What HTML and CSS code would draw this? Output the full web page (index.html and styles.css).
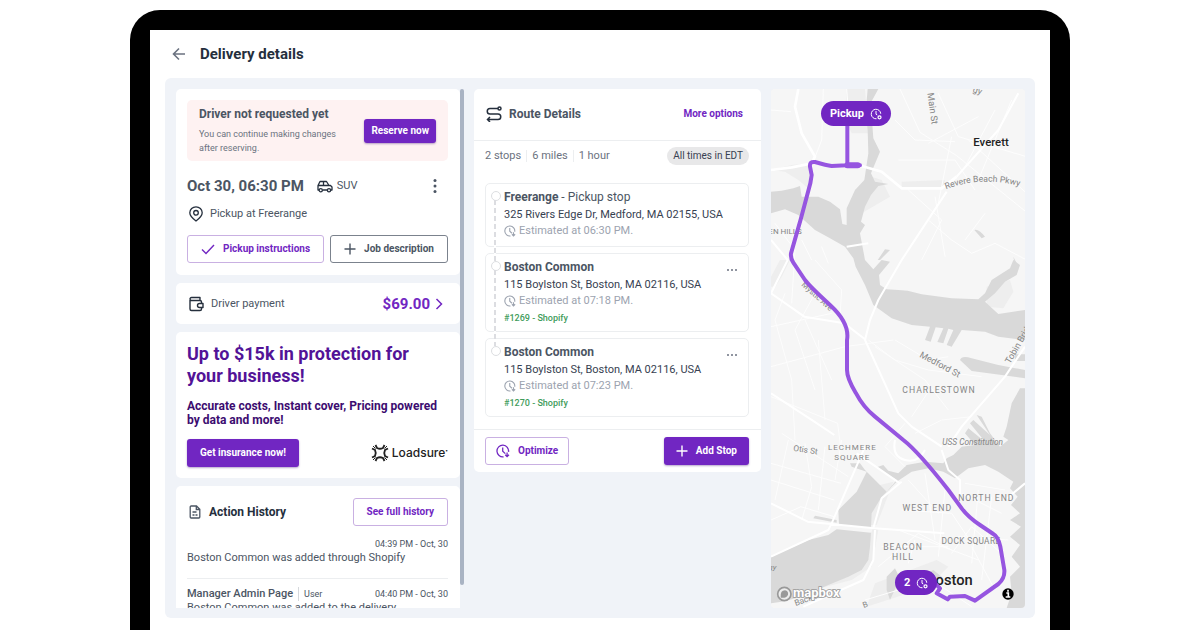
FILE: index.html
```html
<!DOCTYPE html>
<html lang="en">
<head>
<meta charset="utf-8">
<meta name="viewport" content="width=device-width, initial-scale=1">
<title>Delivery details</title>
<link rel="stylesheet" href="styles.css">
</head>
<body>
<svg class="sprite" aria-hidden="true">
  <symbol id="clock" viewBox="0 0 24 24"><path d="M21.500 13.500A10 10 0 1 0 13 21.900M11.500 6v6.500l4.500 4M19 14.500v7M15.800 18.500l3.200 3.200 3.200-3.200" fill="none" stroke="currentColor" stroke-width="2.200"/></symbol>
  <symbol id="clock-pin" viewBox="0 0 24 24"><path d="M21.500 11.500A9.500 9.500 0 1 0 13 21.500M12 6v6.500l2.500 1.500" fill="none" stroke="currentColor" stroke-width="2"/><circle cx="19" cy="18.500" r="3" fill="none" stroke="currentColor" stroke-width="2.500"/></symbol>
  <symbol id="plus" viewBox="0 0 24 24"><path d="M12 1v22M1 12h22" fill="none" stroke="currentColor" stroke-width="2.800"/></symbol>
</svg>
<div class="device">
  <main class="screen">
    <header class="topbar">
      <a class="back" href="#" aria-label="Back"><svg class="icon-14" viewBox="0 0 14 14"><path d="M13 7H2M7 1.500 1.500 7 7 12.500" fill="none" stroke="currentColor" stroke-width="1.600"/></svg></a>
      <h1 class="title">Delivery details</h1>
    </header>
    <div class="panel">
      <section class="column summary">
        <div class="cards">
          <article class="card booking">
            <div class="notice">
              <div class="notice-copy">
                <h2 class="notice-title">Driver not requested yet</h2>
                <p class="notice-text">You can continue making changes after reserving.</p>
              </div>
              <button class="btn primary small" type="button">Reserve now</button>
            </div>
            <div class="when">
              <h2 class="date">Oct 30, 06:30 PM</h2>
              <svg class="icon-car" viewBox="0 0 32 26"><path d="M4 20H2v-9L6 3h13l5 8h3l3 3v6h-2M11 20h9M2 11h23M13 3v8" fill="none" stroke="currentColor" stroke-width="2.600" stroke-linejoin="round"/><circle cx="7.500" cy="20.500" r="3.200" fill="none" stroke="currentColor" stroke-width="2.600"/><circle cx="24" cy="20.500" r="3.200" fill="none" stroke="currentColor" stroke-width="2.600"/></svg>
              <span class="vehicle">SUV</span>
              <button class="dots" type="button" aria-label="Menu"><svg class="icon-16" viewBox="0 0 16 16" fill="currentColor"><circle cx="8" cy="2.500" r="1.500"/><circle cx="8" cy="8" r="1.500"/><circle cx="8" cy="13.500" r="1.500"/></svg></button>
            </div>
            <div class="pickup">
              <svg class="icon-16" viewBox="0 0 16 16"><path d="M8 15C5 12.800 1.800 10 1.800 6.800a6.200 6 0 0 1 12.400 0C14.200 10 11 12.800 8 15Z" fill="none" stroke="currentColor" stroke-width="1.300"/><circle cx="8" cy="6.800" r="2.300" fill="none" stroke="currentColor" stroke-width="1.300"/></svg>
              <span>Pickup at Freerange</span>
            </div>
            <div class="actions">
              <button class="btn outline" type="button"><svg class="icon-14" viewBox="0 0 14 14"><path d="m1 7.500 4 4L13 3" fill="none" stroke="currentColor" stroke-width="1.400"/></svg>Pickup instructions</button>
              <button class="btn outline dark" type="button"><svg class="icon-12"><use href="#plus"/></svg>Job description</button>
            </div>
          </article>

          <a class="card payment" href="#">
            <svg class="icon-16" viewBox="0 0 16 16" fill="none" stroke="currentColor" stroke-width="1.400" stroke-linejoin="round"><path d="M2 4V13a1.500 1.500 0 0 0 1.500 1.500h8.500A1.500 1.500 0 0 0 13.500 13V6A1.500 1.500 0 0 0 12 4.500H3.500a1.500 1.500 0 0 1 0-3H12v3"/><path d="M15 7.500h-3.500a2 2 0 0 0 0 4H15Z" fill="#fff"/></svg>
            <span class="payment-label">Driver payment</span>
            <strong class="amount">$69.00</strong>
            <svg class="icon-chevron" viewBox="0 0 8 12"><path d="m1.500 1 5 5-5 5" fill="none" stroke="currentColor" stroke-width="1.500"/></svg>
          </a>

          <article class="card insurance">
            <h2 class="promo-title">Up to $15k in protection for your business!</h2>
            <p class="promo-text">Accurate costs, Instant cover, Pricing powered by data and more!</p>
            <div class="promo-foot">
              <button class="btn primary wide" type="button">Get insurance now!</button>
              <div class="brand">
                <svg class="icon-18" viewBox="0 0 36 36" fill="none" stroke="currentColor" stroke-width="3.600"><path d="M9 2l3 6Q18 11 24 8l3-6M9 34l3-6Q18 25 24 28l3 6M2 9l6 3Q11 18 8 24l-6 3M34 9l-6 3Q25 18 28 24l6 3"/><path d="M4 4l5 5M32 4l-5 5M4 32l5-5M32 32l-5-5" stroke-width="2"/></svg>
                <span>Loadsure<sup class="mark">•</sup></span>
              </div>
            </div>
          </article>

          <article class="card history">
            <div class="history-head">
              <svg class="icon-doc" viewBox="0 0 12 14" fill="none" stroke="currentColor" stroke-width="1.300"><path d="M1.200 2.200A1 1 0 0 1 2.200 1H7.500L10.800 4.300V12a1 1 0 0 1-1 1H2.200a1 1 0 0 1-1-1ZM7.300 1v3.500h3.500M3.500 7h4M3.500 10h2M6.500 10h2"/></svg>
              <h2 class="history-title">Action History</h2>
              <button class="btn outline wide" type="button">See full history</button>
            </div>
            <div class="event">
              <div class="event-meta"><time class="stamp">04:39 PM - Oct, 30</time></div>
              <p class="event-text">Boston Common was added through Shopify</p>
            </div>
            <div class="event">
              <div class="event-meta"><strong class="actor">Manager Admin Page</strong><span class="role">User</span><time class="stamp">04:40 PM - Oct, 30</time></div>
              <p class="event-text">Boston Common was added to the delivery.</p>
            </div>
          </article>
        </div>
        <div class="scrollbar"></div>
      </section>

      <section class="column">
        <div class="card route">
          <header class="route-head">
            <svg class="icon-16" viewBox="0 0 16 16" fill="none" stroke="currentColor" stroke-width="1.500"><path d="M12 2.500H4a2.700 2.700 0 0 0 0 5.500h8a2.700 2.700 0 0 1 0 5.500H1.500M4 11l-2.500 2.500L4 16"/><circle cx="13.500" cy="2.500" r="1.500"/></svg>
            <h2 class="route-title">Route Details</h2>
            <a class="more" href="#">More options</a>
          </header>
          <div class="stats">
            <span class="stat">2 stops</span><span class="stat">6 miles</span><span class="stat">1 hour</span>
            <span class="zone">All times in EDT</span>
          </div>
          <ol class="stops">
            <li class="stop">
              <h3 class="stop-name">Freerange <span class="kind">- Pickup stop</span></h3>
              <p class="address">325 Rivers Edge Dr, Medford, MA 02155, USA</p>
              <p class="eta"><svg class="icon-12"><use href="#clock"/></svg>Estimated at 06:30 PM.</p>
            </li>
            <li class="stop">
              <h3 class="stop-name">Boston Common</h3>
              <button class="ellipsis" type="button" aria-label="Stop menu"><svg class="icon-10" viewBox="0 0 10 10" fill="currentColor"><circle cx="1" cy="5" r="1"/><circle cx="5" cy="5" r="1"/><circle cx="9" cy="5" r="1"/></svg></button>
              <p class="address">115 Boylston St, Boston, MA 02116, USA</p>
              <p class="eta"><svg class="icon-12"><use href="#clock"/></svg>Estimated at 07:18 PM.</p>
              <p class="order">#1269 - Shopify</p>
            </li>
            <li class="stop">
              <h3 class="stop-name">Boston Common</h3>
              <button class="ellipsis" type="button" aria-label="Stop menu"><svg class="icon-10" viewBox="0 0 10 10" fill="currentColor"><circle cx="1" cy="5" r="1"/><circle cx="5" cy="5" r="1"/><circle cx="9" cy="5" r="1"/></svg></button>
              <p class="address">115 Boylston St, Boston, MA 02116, USA</p>
              <p class="eta"><svg class="icon-12"><use href="#clock"/></svg>Estimated at 07:23 PM.</p>
              <p class="order">#1270 - Shopify</p>
            </li>
          </ol>
          <footer class="route-foot">
            <button class="btn outline" type="button"><svg class="icon-14"><use href="#clock"/></svg>Optimize</button>
            <button class="btn primary" type="button"><svg class="icon-12"><use href="#plus"/></svg>Add Stop</button>
          </footer>
        </div>
      </section>

      <section class="column map">
        <svg class="map-art" viewBox="18 27 762 1557" preserveAspectRatio="xMidYMin slice" role="img" aria-label="Route map">
          <rect class="land" x="18" y="27" width="762" height="1557"/>
          <g class="park">
            <path d="M18 270 80 255 130 250 135 330 100 300 60 275ZM245 27H300L310 160H260L245 130ZM290 400 375 350 350 300 320 290ZM18 590 45 540H75L50 590 30 620 18 620ZM410 305 540 300 535 325H410ZM345 1215l40-10-50 130h-20l5-100ZM325 1340l15 10-20 110-60 40-230 60 160-70 100-50ZM330 1510l185-70 35 20-60 60-185 60ZM665 620l70-20 10 35-30 50-50-5Z"/>
          </g>
          <g class="water">
            <path d="M308 27H340L322 60 310 75 320 105 325 175 345 215 318 280 330 305 370 312 340 318 318 345 300 380 288 425 300 435 285 460 300 540 325 568 350 540 375 545 342 585 345 615 365 628 400 630 428 632 470 643 560 655 640 658 660 640 680 600 735 565 745 540 765 555 755 585 720 605 690 640 660 665 700 702 780 690V780L700 770 660 755 590 750 560 800 545 795 565 750 550 746 535 790 517 786 535 745 512 742 497 785 480 780 495 740 440 735 380 715 325 675 300 615 272 560 265 535 240 500 195 475 150 450 100 405 60 388 18 400V335L50 332 85 325 105 318 110 350 160 350 195 365 225 388 232 432 245 435 245 385 270 330 298 300 310 220 308 150 302 95Z"/>
            <path d="M345 540 375 510 360 508 338 540ZM585 840Q590 825 620 835L700 855 780 870V895L710 885 620 873ZM750 823H780V843H750ZM628 450Q640 445 660 470L650 475ZM745 530 755 550 750 555Z"/>
            <path d="M765 925 740 970 725 1040 715 1070 730 1080 705 1100 675 1060 650 1010 635 1005 675 1065 625 1020 615 1030 660 1085 610 1045 600 1060 630 1095 590 1100 565 1125 545 1135 535 1150 480 1145 425 1155 400 1180 370 1172 355 1155 335 1162 395 1200 365 1235 345 1215 300 1170 285 1150 255 1150 260 1160 305 1175 275 1235 220 1290 222 1335 318 1345 320 1300 350 1250 395 1205 440 1175 490 1165 535 1175 570 1195 610 1165 660 1155 700 1175 745 1205 735 1225 758 1250 738 1275 765 1300 735 1320 768 1340 735 1370 765 1395 740 1430 765 1460 735 1490 740 1540 725 1584H780V925Z"/>
            <path d="M18 1430 130 1380 190 1365 215 1348 318 1358 315 1400 310 1440 290 1470 250 1490 190 1515 110 1550 50 1565 18 1570ZM145 1315 150 1307 215 1320V1328ZM365 1490l25-25 15 30-30 65-10-30ZM460 1495l45-25 25 20-65 45Z"/>
          </g>
          <g class="minor">
            <path d="M175 27 170 180 145 245M18 90l60 5M245 27l5 60 35 15M405 27l60 130 110 70 210 170M520 40l60 130 205 60M560 170l-40 200M400 240h170l60 90M390 120l60 60 120 5M690 90 600 260M740 60 640 300M490 190l150-80M610 180l175 160M430 330l100 90-60 120M560 480l60 40 70-30 95 50M560 480l-70-60M510 350l30 180M110 480l30 60M170 500l20 50M30 430l60 80-10 160M660 400l-60 80"/>
            <path d="M18 740 200 700M18 860 240 800 385 780M60 640 30 720 80 900 90 1080M120 600l30 40-60 110 60 180M150 540l80 90-5 80M310 780l80 60 100 30 160 20M330 800l150 100 70 90M390 780l100 60 60-10M440 1010l60-90M450 1060l80-40 90-10M420 1030l-60 70 60 60M120 720 200 900M18 950l200 80 10 80M160 780l20 240"/>
            <path d="M70 1080 30 1260M120 1090l20 130-30 100M180 1100l-20 190M18 1150l210 60M18 1200l190 60M50 1060l200 130M230 1080 210 1200M18 1320l90-40 100 30M430 1200l90 100M480 1180l30 200M540 1230l-20 200M410 1290l150 10 60 90M400 1350l240 90M450 1380l-20 70M590 1240l120 60M600 1210l120 20M620 1400l70 130M580 1370l150 10M640 1230l-20 220M680 1250l-30 250M340 1460l120-100 100 50M300 1560l200-60 120 80M560 1420l60-80 100 90M350 1400h200"/>
          </g>
          <g class="major">
            <path d="M100 27 90 80 110 160 150 230 140 250 80 262 18 270M290 258 350 275 410 325 530 325 575 290"/>
          </g>
          <g class="medium">
            <path d="M575 290 700 150 760 40M545 335 410 540 340 660 315 720 300 780 400 1000 440 1040 530 1100M245 500 310 490M18 480l50 60-50 100 100 70 120 20 65 50M18 940l130 85 60 40M780 800l-60 90-130 150-40 60M300 1100 200 1330 190 1350 18 1430M18 1270l110 55 200 20 210 15M275 1120l130 90M330 1350l-5 90-30 60-180 80M530 1110l20 60 35 30v60M780 1210l-60 50M325 1345l25-90 60-50M390 1080q-10 50 30 60t60-30"/>
          </g>
          <g class="map-label">
            <text x="487" y="40" transform="rotate(82 487 40)" font-size="28">Main St</text>
            <text x="622" y="35" font-size="26" transform="rotate(20 622 35)">gy</text>
            <path id="revere" d="M543 328Q650 285 775 322" fill="none"/>
            <text font-size="26"><textPath href="#revere">Revere Beach Pkwy</textPath></text>
            <text x="10" y="462" font-size="24">EN HILLS</text>
            <text x="108" y="616" font-size="24" transform="rotate(42 108 616)">Mystic Ave</text>
            <text x="462" y="830" font-size="27" transform="rotate(28 462 830)">Medford St</text>
            <text x="735" y="853" font-size="27" transform="rotate(-60 735 853)">Tobin Bridge</text>
            <text x="84" y="1112" font-size="25" transform="rotate(9 84 1112)">Otis St</text>
            <text x="532" y="1094" font-size="25" font-style="italic">USS Constitution</text>
            <text x="92" y="1578" font-size="25" transform="rotate(-20 92 1578)">Back Bay</text>
            <text x="10" y="1470" font-size="24" font-style="italic">gy</text>
            <text x="296" y="1584" font-size="24" transform="rotate(-20 296 1584)">B</text>
          </g>
          <g class="area-label">
            <text x="522" y="940" font-size="26">CHARLESTOWN</text>
            <text x="262" y="1109" font-size="24">LECHMERE</text><text x="262" y="1139" font-size="24">SQUARE</text>
            <text x="664" y="1263" font-size="26">NORTH END</text>
            <text x="487" y="1293" font-size="26">WEST END</text>
            <text x="414" y="1410" font-size="26">BEACON</text><text x="414" y="1441" font-size="26">HILL</text>
            <text class="tight" x="618" y="1393" font-size="25">DOCK SQUARE</text>
          </g>
          <text class="town" x="625" y="198" font-size="34">Everett</text>
          <text class="town" x="484" y="1515" font-size="44">Boston</text>
          <path class="route-line" d="M247 130V256M285 256H245L200 258Q185 256 150 246 133 244 135 260L140 285 136 310 108 415 78 520Q76 535 85 548L120 600Q135 620 195 675T246 780V870Q246 895 272 938 295 982 330 1010L415 1080Q460 1115 550 1230L590 1285Q610 1312 645 1335L685 1362Q700 1370 706 1400L718 1470Q720 1495 700 1512L630 1562 600 1548 555 1550 548 1558 515 1540 525 1525 510 1510"/>
          <path class="route-start" d="M247 256H278"/>
          <g class="mapbox-logo"><circle class="ring" cx="58" cy="1542" r="20"/><path class="drop" d="M47 1553Q45 1531 60 1531 71 1533 69 1544 63 1556 47 1553Z"/><text x="84" y="1552" font-size="39">mapbox</text></g>
          <g class="info"><circle cx="729" cy="1542" r="17"/><path d="M724 1539h6v11M722 1551h14M729 1529v6"/></g>
        </svg>
        <span class="pin pin-start">Pickup <svg class="icon-12"><use href="#clock-pin"/></svg></span>
        <span class="pin pin-end">2 <svg class="icon-12"><use href="#clock-pin"/></svg></span>
      </section>
    </div>
  </main>
</div>
</body>
</html>
```

FILE: styles.css
```css
:root {
  --purple: #7126c2;
  --purple-line: #c9b0e2;
  --ink: #252f3d;
  --slate: #4b5563;
  --muted: #6b7280;
  --line: #eceef0;
  --surface: #f0f3f8;
}
* { box-sizing: border-box; }
h1, h2, h3, p, ol { margin: 0; padding: 0; }
body {
  margin: 0;
  height: 100vh;
  overflow: hidden;
  padding: 10px 10px 0;
  background: #fff;
  color: var(--slate);
  font: 400 11px/16px Roboto, "Liberation Sans", sans-serif;
}
button { font: inherit; color: inherit; background: none; border: 0; padding: 0; cursor: pointer; }
a { color: inherit; text-decoration: none; }
svg { flex: none; display: block; }
.sprite { position: absolute; width: 0; height: 0; }
.icon-10 { width: 10px; height: 10px; }
.icon-12 { width: 12px; height: 12px; }
.icon-14 { width: 14px; height: 14px; }
.icon-16 { width: 16px; height: 16px; }
.icon-18 { width: 18px; height: 18px; }
.icon-car { width: 16px; height: 13px; color: var(--ink); }
.icon-doc { width: 12px; height: 14px; }
.icon-chevron { width: 8px; height: 12px; }

.device {
  max-width: 940px;
  height: 100%;
  margin: 0 auto;
  padding: 20px 20px 0;
  background: #000;
  border-radius: 30px 30px 0 0;
}
.screen { height: 100%; display: flex; flex-direction: column; background: #fff; padding: 0 15px 12px; }
.topbar { display: flex; align-items: center; gap: 14px; height: 48px; padding-left: 7px; flex: none; }
.back { color: var(--muted); }
.title { font-size: 15px; font-weight: 700; line-height: 20px; color: var(--ink); }

.panel {
  flex: 1;
  min-height: 0;
  display: grid;
  grid-template-columns: 288fr 287fr 254fr;
  grid-template-rows: minmax(0, 1fr);
  gap: 10px;
  padding: 11px 10px 10px 11px;
  background: var(--surface);
  border-radius: 6px;
}
.column { min-width: 0; overflow: hidden; }
.card { background: #fff; border-radius: 5px; }

.summary { display: flex; }
.cards { flex: 1; min-width: 0; display: flex; flex-direction: column; gap: 8px; }
.cards > .card { flex: none; }
.scrollbar { width: 4px; height: 496px; background: #a9b3c3; border-radius: 2px; }

.btn {
  display: inline-flex;
  align-items: center;
  justify-content: center;
  height: 28px;
  padding: 0 12px;
  gap: 8px;
  border-radius: 3px;
  font-size: 10px;
  font-weight: 700;
  white-space: nowrap;
}
.primary { background: var(--purple); color: #fff; box-shadow: 0 1px 2px #4b208066; }
.small { height: 24px; padding: 0 7px; }
.outline { padding: 0 10px; border: 1px solid var(--purple-line); color: var(--purple); background: #fff; }
.wide { padding: 0 13px; }
.dark { border-color: #7b828d; color: var(--slate); }

.booking { padding: 11px 12px 12px 11px; }
.notice { display: flex; align-items: center; justify-content: space-between; gap: 12px; padding: 6px 12px; background: #fef2f2; border-radius: 5px; }
.notice-title { font-size: 12px; line-height: 16px; font-weight: 700; }
.notice-copy { flex: 1; max-width: 150px; }
.notice-text { margin-top: 5px; font-size: 9px; line-height: 14px; color: var(--muted); }
.when { display: flex; align-items: center; height: 18px; margin-top: 16px; }
.date { font-size: 15px; line-height: 18px; font-weight: 700; margin-right: 13px; }
.vehicle { margin-left: 4px; }
.dots { margin-left: auto; margin-right: 5px; color: var(--slate); }
.pickup { display: flex; align-items: center; gap: 6px; height: 16px; margin: 11px 0 13px; padding-left: 1px; }
.pickup svg { color: var(--ink); }
.actions { display: flex; gap: 6px; }
.actions .btn { flex: 1 1 auto; }

.payment { display: flex; align-items: center; height: 41px; padding: 0 17px 0 12px; }
.payment svg:first-child { color: var(--ink); }
.payment-label { margin-left: 7px; }
.amount { margin-left: auto; margin-right: 5px; font-size: 15px; font-weight: 700; color: var(--purple); }
.icon-chevron { color: var(--purple); }

.insurance { padding: 11px 12px 11px 11px; }
.promo-title { max-width: 240px; font-size: 18px; line-height: 22px; font-weight: 700; color: #521397; }
.promo-text { margin-top: 12px; font-size: 12px; line-height: 14px; font-weight: 700; color: #3c0c70; }
.promo-foot { display: flex; align-items: center; justify-content: space-between; margin-top: 12px; }
.brand { display: flex; align-items: center; gap: 3px; color: #222; font: 500 12px/16px Inter, sans-serif; }
.mark { font-size: 5px; line-height: 5px; vertical-align: 5px; }

.history { padding: 12px 12px 11px 11px; }
.history-head { display: flex; align-items: center; gap: 8px; padding-left: 2px; }
.history-title { flex: 1; font-size: 12px; font-weight: 700; color: var(--ink); }
.event { padding: 11px 0 13px; border-bottom: 1px solid var(--line); }
.event + .event { padding-top: 8px; }
.event-meta { display: flex; align-items: center; line-height: 14px; }
.stamp { margin-left: auto; font-size: 9px; }
.event-text { line-height: 14px; }
.actor { font-size: 11px; font-weight: 500; padding-right: 5px; border-right: 1px solid #d5d8dc; }
.role { margin-left: 5px; font-size: 9px; }

.route-head { display: flex; align-items: center; gap: 7px; height: 52px; padding: 0 18px 2px 12px; border-bottom: 1px solid var(--line); }
.route-head svg { color: var(--ink); }
.route-title { flex: 1; font-size: 12px; font-weight: 700; }
.more { font-size: 10px; font-weight: 700; color: var(--purple); }
.stats { display: flex; align-items: center; padding: 6px 12px 0 11px; color: var(--muted); }
.stat { line-height: 12px; padding-right: 5px; margin-right: 5px; border-right: 1px solid var(--line); }
.stat:nth-child(3) { border: 0; }
.zone { margin-left: auto; padding: 0 6px; border-radius: 9px; background: #e8e8e9; color: #374151; font-size: 10px; line-height: 18px; }
.stops { list-style: none; display: grid; gap: 6px; padding: 18px 12px 12px 11px; }
.stop { position: relative; padding: 5px 10px 7px 18px; border: 1px solid var(--line); border-radius: 5px; }
.stop::before { content: ""; position: absolute; z-index: 1; left: 5px; top: 7px; width: 8px; height: 8px; border: 1px solid #dcdee1; border-radius: 50%; background: #fff; }
.stop::after { content: ""; position: absolute; left: 8px; top: 16px; bottom: -15px; width: 2px; background: repeating-linear-gradient(#dcdde1 0 5px, #fff 5px 8px); z-index: 1; }
.stop:last-child::after { content: none; }
.stop-name { font-size: 12px; line-height: 17px; font-weight: 700; }
.kind { font-weight: 400; }
.address { line-height: 17px; color: #374151; }
.eta { display: flex; align-items: center; gap: 3px; line-height: 16px; color: #9ca3af; }
.order { margin-top: 3px; line-height: 12px; font-size: 9px; font-weight: 500; color: #3f9c5b; }
.ellipsis { position: absolute; top: 11px; right: 11px; color: var(--muted); }
.route-foot { display: flex; justify-content: space-between; padding: 7px 12px 7px 11px; border-top: 1px solid var(--line); }

.map { position: relative; border-radius: 4px; background: #f6f6f6; }
.map-art { width: 100%; height: 100%; font-family: Roboto, sans-serif; }
.land { fill: #f6f6f6; }
.park { fill: #eee; }
.water { fill: #d9d9d9; }
.minor { fill: none; stroke: #fdfdfd; stroke-width: 3; }
.medium { fill: none; stroke: #fff; stroke-width: 6; stroke-linejoin: round; }
.major { fill: none; stroke: #fff; stroke-width: 8; stroke-linejoin: round; }
.map-label { fill: #858585; }
.area-label { fill: #858585; text-anchor: middle; letter-spacing: 3px; }
.tight { letter-spacing: 1px; }
.town { fill: #222; font-weight: 500; }
.route-line { fill: none; stroke: #9655e0; stroke-width: 12; stroke-linejoin: round; stroke-linecap: round; }
.route-start { stroke: #9655e0; stroke-width: 18; stroke-linecap: round; }
.ring { fill: #fff; fill-opacity: .5; stroke: #999; stroke-width: 5; }
.drop { fill: #999; }
.mapbox-logo text { fill: #fff; stroke: #999; stroke-width: 5; paint-order: stroke; font-weight: 700; }
.info path { fill: none; stroke: #fff; stroke-width: 5; }
.pin { position: absolute; display: flex; align-items: center; gap: 6px; height: 25px; padding: 0 9px; border-radius: 13px; background: var(--purple); color: #fff; font-size: 11px; font-weight: 700; }
.pin-start { left: 50px; top: 12px; }
.pin-end { left: 124px; top: 481px; }
```
